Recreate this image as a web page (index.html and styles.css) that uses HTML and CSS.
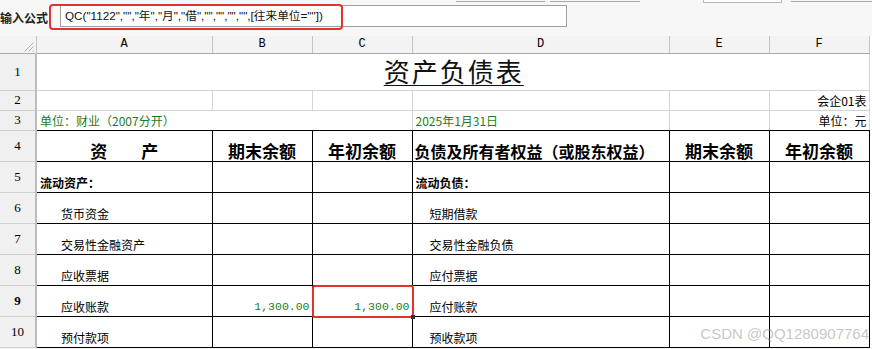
FILE: index.html
```html
<!DOCTYPE html>
<html lang="zh-CN">
<head>
    <meta charset="UTF-8">
    <title>资产负债表</title>
    <link rel="stylesheet" href="styles.css">
</head>
<body>
    <!-- Formula Bar -->
    <div class="formula-bar">
        <div class="tool-edges">
            <span class="edge edge-a"></span>
            <span class="edge edge-b"></span>
            <span class="edge edge-c"></span>
            <span class="edge edge-d"></span>
        </div>
        <span class="formula-label">输入公式</span>
        <div class="formula-input">QC("1122","","年","月","借","","","","",[往来单位=""])</div>
        <div class="formula-mark"></div>
    </div>

    <!-- Sheet -->
    <div class="sheet">
        <table class="grid">
            <colgroup>
                <col class="c-head">
                <col class="c-a">
                <col class="c-b">
                <col class="c-c">
                <col class="c-d">
                <col class="c-e">
                <col class="c-f">
            </colgroup>
            <tr class="col-heads">
                <th class="corner"><span class="hatch"></span></th>
                <th>A</th><th>B</th><th>C</th><th>D</th><th>E</th><th>F</th>
            </tr>
            <tr class="r1">
                <th class="rh">1</th>
                <td colspan="6" class="title"><span>资产负债表</span></td>
            </tr>
            <tr class="r2">
                <th class="rh">2</th>
                <td></td><td></td><td></td><td></td><td></td>
                <td class="right">会企01表</td>
            </tr>
            <tr class="r3">
                <th class="rh">3</th>
                <td colspan="3" class="green">单位：财业（2007分开）</td>
                <td class="green">2025年1月31日</td>
                <td></td>
                <td class="right">单位：元</td>
            </tr>
            <tr class="r4 box">
                <th class="rh">4</th>
                <td class="head">资　　产</td>
                <td class="head">期末余额</td>
                <td class="head">年初余额</td>
                <td class="head head-d">负债及所有者权益（或股东权益）</td>
                <td class="head">期末余额</td>
                <td class="head">年初余额</td>
            </tr>
            <tr class="box">
                <th class="rh">5</th>
                <td class="bold">流动资产：</td><td></td><td></td>
                <td class="bold">流动负债：</td><td></td><td></td>
            </tr>
            <tr class="box">
                <th class="rh">6</th>
                <td class="item">货币资金</td><td></td><td></td>
                <td class="item-d">短期借款</td><td></td><td></td>
            </tr>
            <tr class="box">
                <th class="rh">7</th>
                <td class="item">交易性金融资产</td><td></td><td></td>
                <td class="item-d">交易性金融负债</td><td></td><td></td>
            </tr>
            <tr class="box">
                <th class="rh">8</th>
                <td class="item">应收票据</td><td></td><td></td>
                <td class="item-d">应付票据</td><td></td><td></td>
            </tr>
            <tr class="box r9">
                <th class="rh current">9</th>
                <td class="item">应收账款</td>
                <td class="num">1,300.00</td>
                <td class="num active">1,300.00<span class="sel"></span><span class="handle"></span></td>
                <td class="item-d">应付账款</td><td></td><td></td>
            </tr>
            <tr class="box">
                <th class="rh">10</th>
                <td class="item">预付款项</td><td></td><td></td>
                <td class="item-d">预收款项</td><td></td><td></td>
            </tr>
        </table>
        <div class="watermark">CSDN @QQ1280907764</div>
    </div>
</body>
</html>
```

FILE: styles.css
```css
/* General */
* {
    margin: 0;
    padding: 0;
    box-sizing: border-box;
}

body {
    width: 872px;
    height: 349px;
    overflow: hidden;
    background: #f7f7f7;
    font-family: "Noto Sans CJK SC", "Liberation Sans", sans-serif;
    font-size: 12px;
    color: #000;
}

/* Formula Bar */
.formula-bar {
    position: relative;
    height: 36px;
    display: flex;
    align-items: flex-start;
    background: #f7f7f7;
}

.tool-edges {
    position: absolute;
    top: 0;
    left: 0;
    width: 100%;
    height: 3px;
}

.edge {
    position: absolute;
    top: 0;
    height: 2px;
    border-bottom: 1px solid #a8a8a8;
}

.edge-a { left: 456px; width: 89px; }
.edge-b { left: 550px; width: 90px; }
.edge-c { left: 703px; width: 79px; background: #fff; border: 1px solid #b8b8b8; border-top: none; height: 3px; }
.edge-d { left: 791px; width: 81px; }

.formula-label {
    font-weight: bold;
    font-size: 12px;
    line-height: 14px;
    margin-top: 11px;
    width: 60px;
    color: #222;
}

.formula-input {
    margin-top: 5px;
    width: 507px;
    height: 22px;
    background: #fff;
    border: 1px solid #a0a0a0;
    padding-left: 4px;
    line-height: 20px;
    font-family: "Liberation Sans", "Noto Sans CJK SC", sans-serif;
    font-size: 11.7px;
    color: #111;
    white-space: nowrap;
    overflow: hidden;
}

.formula-mark {
    position: absolute;
    left: 49px;
    top: 4px;
    width: 294px;
    height: 26px;
    border: 2px solid #e5302d;
    border-radius: 4px;
}

/* Sheet */
.sheet {
    position: relative;
    background: #fff;
}

.grid {
    border-collapse: collapse;
    table-layout: fixed;
    width: 869px;
    background: #fff;
}

.c-head { width: 36px; }
.c-a { width: 176px; }
.c-b { width: 100px; }
.c-c { width: 100px; }
.c-d { width: 257px; }
.c-e { width: 100px; }
.c-f { width: 100px; }

.grid td {
    border: 1px solid #d4d4d4;
    vertical-align: bottom;
    padding: 0 3px 1px 3px;
    white-space: nowrap;
    overflow: hidden;
    line-height: 16px;
}

/* Column headers */
.col-heads th {
    height: 17px;
    background: #f3f3f3;
    border: 1px solid #c4c4c4;
    border-top: none;
    border-bottom: 1px solid #a8a8a8;
    font-family: "Liberation Mono", monospace;
    font-weight: normal;
    font-size: 12px;
    line-height: 14px;
    color: #000;
}

.corner {
    position: relative;
    border-left: none !important;
}

.hatch {
    position: absolute;
    right: 2px;
    bottom: 1px;
    width: 11px;
    height: 11px;
    background: repeating-linear-gradient(135deg, transparent 0 2px, #b0b0b0 2px 3px);
    clip-path: polygon(100% 0, 100% 100%, 0 100%);
}

/* Row headers */
.rh {
    background: #f0f0f0;
    border: 1px solid #d0d0d0;
    border-left: none;
    border-right: 2px solid #bdbdbd;
    font-family: "Liberation Serif", serif;
    font-weight: normal;
    font-size: 13px;
    color: #000;
    vertical-align: middle;
    text-align: center;
}

.rh.current {
    font-weight: bold;
}

.r1 { height: 37px; }
.r2 { height: 20px; }
.r3 { height: 20px; }
.r4 { height: 30px; }
.box { height: 31px; }

.r3 td {
    border-bottom: 1px solid #000;
}

.box td {
    border: 1px solid #000;
}

/* Cell content */
.title {
    text-align: center;
    vertical-align: middle !important;
}

.title span {
    font-size: 26px;
    line-height: 32px;
    text-decoration: underline;
    text-underline-offset: 3px;
    text-decoration-thickness: 1px;
    letter-spacing: 2px;
    color: #111;
    margin-left: 2px;
}

.right {
    text-align: right;
    padding-right: 2px !important;
}

.green {
    color: #1e7b1e;
}

.head {
    text-align: center;
    font-weight: bold;
    font-size: 17px;
    line-height: 20px;
    padding-bottom: 2px !important;
}

.head-d {
    font-size: 16px;
    text-align: left;
    padding-left: 2px !important;
}

.bold {
    font-weight: bold;
}

.item {
    padding-left: 24px !important;
}

.item-d {
    padding-left: 17px !important;
}

.num {
    position: relative;
    text-align: right;
    font-family: "Liberation Mono", monospace;
    font-size: 11.5px;
    color: #1e7b1e;
    padding-right: 2px !important;
}

.active {
    overflow: visible !important;
}

.sel {
    position: absolute;
    left: -1px;
    top: -1px;
    right: -2px;
    bottom: -2px;
    border: 2px solid #e5302d;
    border-radius: 3px;
}

.handle {
    position: absolute;
    right: -3px;
    bottom: -3px;
    width: 4px;
    height: 4px;
    background: #333;
}

.watermark {
    position: absolute;
    right: 3px;
    bottom: 6px;
    font-family: "Liberation Sans", sans-serif;
    font-size: 15px;
    color: rgba(150, 150, 150, 0.55);
}
```
